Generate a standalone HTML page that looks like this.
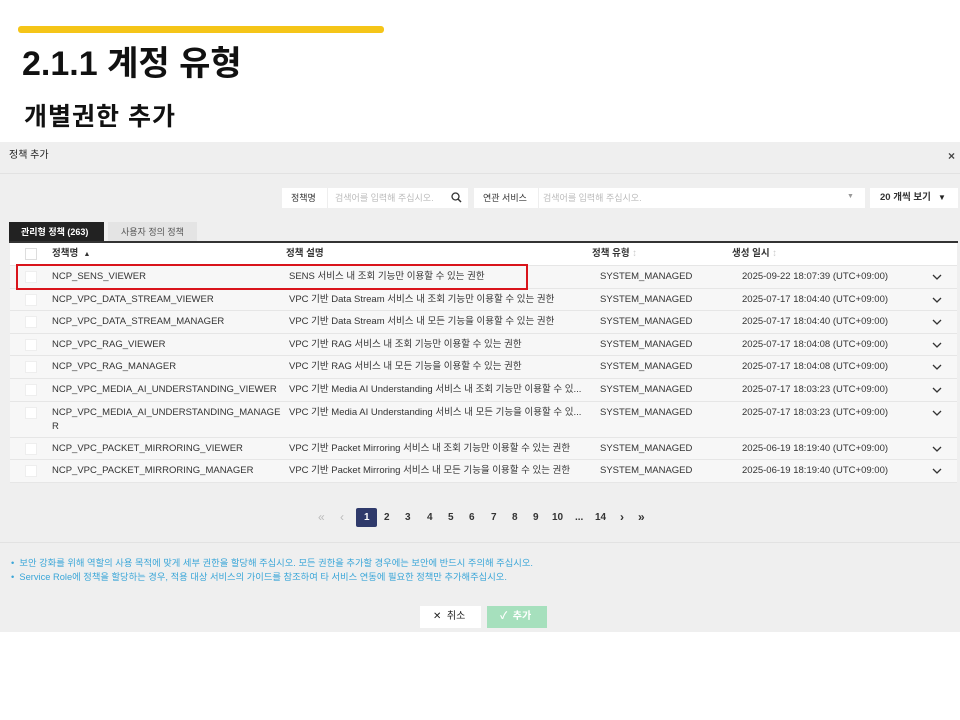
<!DOCTYPE html>
<html><head><meta charset="utf-8"><style>
*{margin:0;padding:0;box-sizing:border-box}
body{width:960px;height:720px;background:#fff;font-family:"Liberation Sans","Noto Sans CJK KR",sans-serif;position:relative;overflow:hidden;color:#222}
.a{position:absolute}
.t{font-size:9.5px;color:#333;white-space:nowrap;line-height:12px}
.row{position:absolute;left:10px;width:947px;background:#f7f7f7;border-bottom:1px solid #e6e6e6}
.cb{position:absolute;left:15px;top:5px;width:12px;height:12px;background:#fff;border:1px solid #eee}
.c1{position:absolute;left:42px;top:5px}
.c2{position:absolute;left:279px;top:5px}
.c3{position:absolute;left:590px;top:5px}
.c4{position:absolute;left:732px;top:5px}
.ch{position:absolute;left:922px;top:8px;width:10px;height:6px}
.pg{position:absolute;top:512px;font-size:10px;font-weight:bold;color:#333;line-height:12px}
</style></head><body>
<svg width="0" height="0" style="position:absolute"><defs><symbol id="cv" viewBox="0 0 10 6"><path d="M1 1L5 5L9 1" fill="none" stroke="#333" stroke-width="1.3"/></symbol></defs></svg>
<div class="a" style="left:18px;top:26px;width:366px;height:7px;background:#f5c518;border-radius:3px"></div>
<div class="a" style="left:22px;top:44px;font-size:34px;font-weight:bold;color:#111;line-height:40px">2.1.1 계정 유형</div>
<div class="a" style="left:24px;top:101px;font-size:25px;font-weight:bold;color:#111;line-height:32px;letter-spacing:1px">개별권한 추가</div>

<div class="a" style="left:0;top:142px;width:960px;height:490px;background:#efefef"></div>
<div class="a" style="left:0;top:173px;width:960px;height:1px;background:#e2e2e2"></div>
<div class="a t" style="left:9px;top:150px;font-size:10px;color:#222">정책 추가</div>
<div class="a" style="left:948px;top:150px;font-size:12px;color:#444;font-weight:bold;line-height:12px">×</div>

<div class="a" style="left:282px;top:188px;width:186px;height:20px;background:#fff"></div>
<div class="a" style="left:327px;top:188px;width:1px;height:20px;background:#eee"></div>
<div class="a t" style="left:291px;top:192px;font-size:9px">정책명</div>
<div class="a t" style="left:335px;top:192px;font-size:9px;color:#bbb">검색어를 입력해 주십시오.</div>
<svg class="a" style="left:451px;top:192px" width="11" height="11" viewBox="0 0 11 11"><circle cx="4.5" cy="4.5" r="3.5" fill="none" stroke="#333" stroke-width="1.3"/><path d="M7 7L10 10" stroke="#333" stroke-width="1.5"/></svg>
<div class="a" style="left:474px;top:188px;width:391px;height:20px;background:#fff"></div>
<div class="a" style="left:538px;top:188px;width:1px;height:20px;background:#eee"></div>
<div class="a t" style="left:483px;top:192px;font-size:9px">연관 서비스</div>
<div class="a t" style="left:543px;top:192px;font-size:9px;color:#bbb">검색어를 입력해 주십시오.</div>
<div class="a" style="left:847px;top:193px;font-size:7px;color:#999">▼</div>
<div class="a" style="left:870px;top:188px;width:88px;height:20px;background:#fff"></div>
<div class="a t" style="left:880px;top:192px;font-size:9.5px;font-weight:bold">20 개씩 보기</div>
<div class="a" style="left:938px;top:193px;font-size:8px">▼</div>

<div class="a" style="left:9px;top:222px;width:95px;height:20px;background:#222"></div>
<div class="a t" style="left:21px;top:226px;font-size:9px;color:#fff;font-weight:bold">관리형 정책 (263)</div>
<div class="a" style="left:108px;top:222px;width:89px;height:20px;background:#e4e4e4"></div>
<div class="a t" style="left:121px;top:226px;font-size:9px;color:#555">사용자 정의 정책</div>
<div class="a" style="left:9px;top:241px;width:949px;height:2px;background:#333"></div>

<div class="row" style="top:243px;height:23px;background:#fff">
<div class="cb" style="border-color:#ddd"></div>
<div class="c1 t" style="font-weight:bold;top:5px">정책명 &nbsp;<span style="font-size:7px">▲</span></div>
<div class="c2 t" style="left:276px;font-weight:bold;top:5px">정책 설명</div>
<div class="c3 t" style="left:582px;font-weight:bold;top:5px">정책 유형 <span style="color:#ccc">↕</span></div>
<div class="c4 t" style="left:722px;font-weight:bold;top:5px">생성 일시 <span style="color:#ccc">↕</span></div>
</div>

<div class="row" style="top:266px;height:23px"><div class="cb"></div><div class="c1 t">NCP_SENS_VIEWER</div><div class="c2 t">SENS 서비스 내 조회 기능만 이용할 수 있는 권한</div><div class="c3 t">SYSTEM_MANAGED</div><div class="c4 t">2025-09-22 18:07:39 (UTC+09:00)</div><svg class="ch"><use href="#cv"/></svg></div>
<div class="row" style="top:289px;height:22px"><div class="cb"></div><div class="c1 t">NCP_VPC_DATA_STREAM_VIEWER</div><div class="c2 t">VPC 기반 Data Stream 서비스 내 조회 기능만 이용할 수 있는 권한</div><div class="c3 t">SYSTEM_MANAGED</div><div class="c4 t">2025-07-17 18:04:40 (UTC+09:00)</div><svg class="ch"><use href="#cv"/></svg></div>
<div class="row" style="top:311px;height:23px"><div class="cb"></div><div class="c1 t">NCP_VPC_DATA_STREAM_MANAGER</div><div class="c2 t">VPC 기반 Data Stream 서비스 내 모든 기능을 이용할 수 있는 권한</div><div class="c3 t">SYSTEM_MANAGED</div><div class="c4 t">2025-07-17 18:04:40 (UTC+09:00)</div><svg class="ch"><use href="#cv"/></svg></div>
<div class="row" style="top:334px;height:22px"><div class="cb"></div><div class="c1 t">NCP_VPC_RAG_VIEWER</div><div class="c2 t">VPC 기반 RAG 서비스 내 조회 기능만 이용할 수 있는 권한</div><div class="c3 t">SYSTEM_MANAGED</div><div class="c4 t">2025-07-17 18:04:08 (UTC+09:00)</div><svg class="ch"><use href="#cv"/></svg></div>
<div class="row" style="top:356px;height:23px"><div class="cb"></div><div class="c1 t">NCP_VPC_RAG_MANAGER</div><div class="c2 t">VPC 기반 RAG 서비스 내 모든 기능을 이용할 수 있는 권한</div><div class="c3 t">SYSTEM_MANAGED</div><div class="c4 t">2025-07-17 18:04:08 (UTC+09:00)</div><svg class="ch"><use href="#cv"/></svg></div>
<div class="row" style="top:379px;height:23px"><div class="cb"></div><div class="c1 t">NCP_VPC_MEDIA_AI_UNDERSTANDING_VIEWER</div><div class="c2 t">VPC 기반 Media AI Understanding 서비스 내 조회 기능만 이용할 수 있...</div><div class="c3 t">SYSTEM_MANAGED</div><div class="c4 t">2025-07-17 18:03:23 (UTC+09:00)</div><svg class="ch"><use href="#cv"/></svg></div>
<div class="row" style="top:402px;height:36px"><div class="cb"></div><div class="c1 t" style="line-height:14px;top:4px">NCP_VPC_MEDIA_AI_UNDERSTANDING_MANAGE<br>R</div><div class="c2 t">VPC 기반 Media AI Understanding 서비스 내 모든 기능을 이용할 수 있...</div><div class="c3 t">SYSTEM_MANAGED</div><div class="c4 t">2025-07-17 18:03:23 (UTC+09:00)</div><svg class="ch"><use href="#cv"/></svg></div>
<div class="row" style="top:438px;height:22px"><div class="cb"></div><div class="c1 t">NCP_VPC_PACKET_MIRRORING_VIEWER</div><div class="c2 t">VPC 기반 Packet Mirroring 서비스 내 조회 기능만 이용할 수 있는 권한</div><div class="c3 t">SYSTEM_MANAGED</div><div class="c4 t">2025-06-19 18:19:40 (UTC+09:00)</div><svg class="ch"><use href="#cv"/></svg></div>
<div class="row" style="top:460px;height:23px"><div class="cb"></div><div class="c1 t">NCP_VPC_PACKET_MIRRORING_MANAGER</div><div class="c2 t">VPC 기반 Packet Mirroring 서비스 내 모든 기능을 이용할 수 있는 권한</div><div class="c3 t">SYSTEM_MANAGED</div><div class="c4 t">2025-06-19 18:19:40 (UTC+09:00)</div><svg class="ch"><use href="#cv"/></svg></div>

<div class="a" style="left:16px;top:264px;width:512px;height:26px;border:2.5px solid #d9141b"></div>

<div class="pg" style="left:318px;color:#bbb;font-weight:normal;top:511px;font-size:12px">«</div>
<div class="pg" style="left:340px;color:#bbb;font-weight:normal;top:511px;font-size:12px">‹</div>
<div class="a" style="left:356px;top:508px;width:21px;height:19px;background:#2f3a6b;border-radius:2px"></div>
<div class="pg" style="left:364px;color:#fff">1</div>
<div class="pg" style="left:384px">2</div><div class="pg" style="left:405px">3</div><div class="pg" style="left:427px">4</div><div class="pg" style="left:448px">5</div><div class="pg" style="left:469px">6</div><div class="pg" style="left:491px">7</div><div class="pg" style="left:512px">8</div><div class="pg" style="left:533px">9</div><div class="pg" style="left:552px">10</div><div class="pg" style="left:575px">...</div><div class="pg" style="left:595px">14</div>
<div class="pg" style="left:620px;top:511px;font-size:12px">›</div>
<div class="pg" style="left:638px;top:511px;font-size:12px">»</div>

<div class="a" style="left:0;top:542px;width:960px;height:1px;background:#e2e2e2"></div>
<div class="a t" style="left:11px;top:557px;font-size:9.3px;color:#3aa6d8">•&nbsp; 보안 강화를 위해 역할의 사용 목적에 맞게 세부 권한을 할당해 주십시오. 모든 권한을 추가할 경우에는 보안에 반드시 주의해 주십시오.</div>
<div class="a t" style="left:11px;top:571px;font-size:9.3px;color:#3aa6d8">•&nbsp; Service Role에 정책을 할당하는 경우, 적용 대상 서비스의 가이드를 참조하여 타 서비스 연동에 필요한 정책만 추가해주십시오.</div>

<div class="a" style="left:420px;top:606px;width:61px;height:22px;background:#fff"></div>
<div class="a t" style="left:433px;top:611px;font-size:10px;color:#222">✕&nbsp; 취소</div>
<div class="a" style="left:487px;top:606px;width:60px;height:22px;background:#a6e0bd"></div>
<div class="a t" style="left:500px;top:611px;font-size:10px;color:#fff;font-weight:bold">✓&nbsp; 추가</div>
</body></html>
